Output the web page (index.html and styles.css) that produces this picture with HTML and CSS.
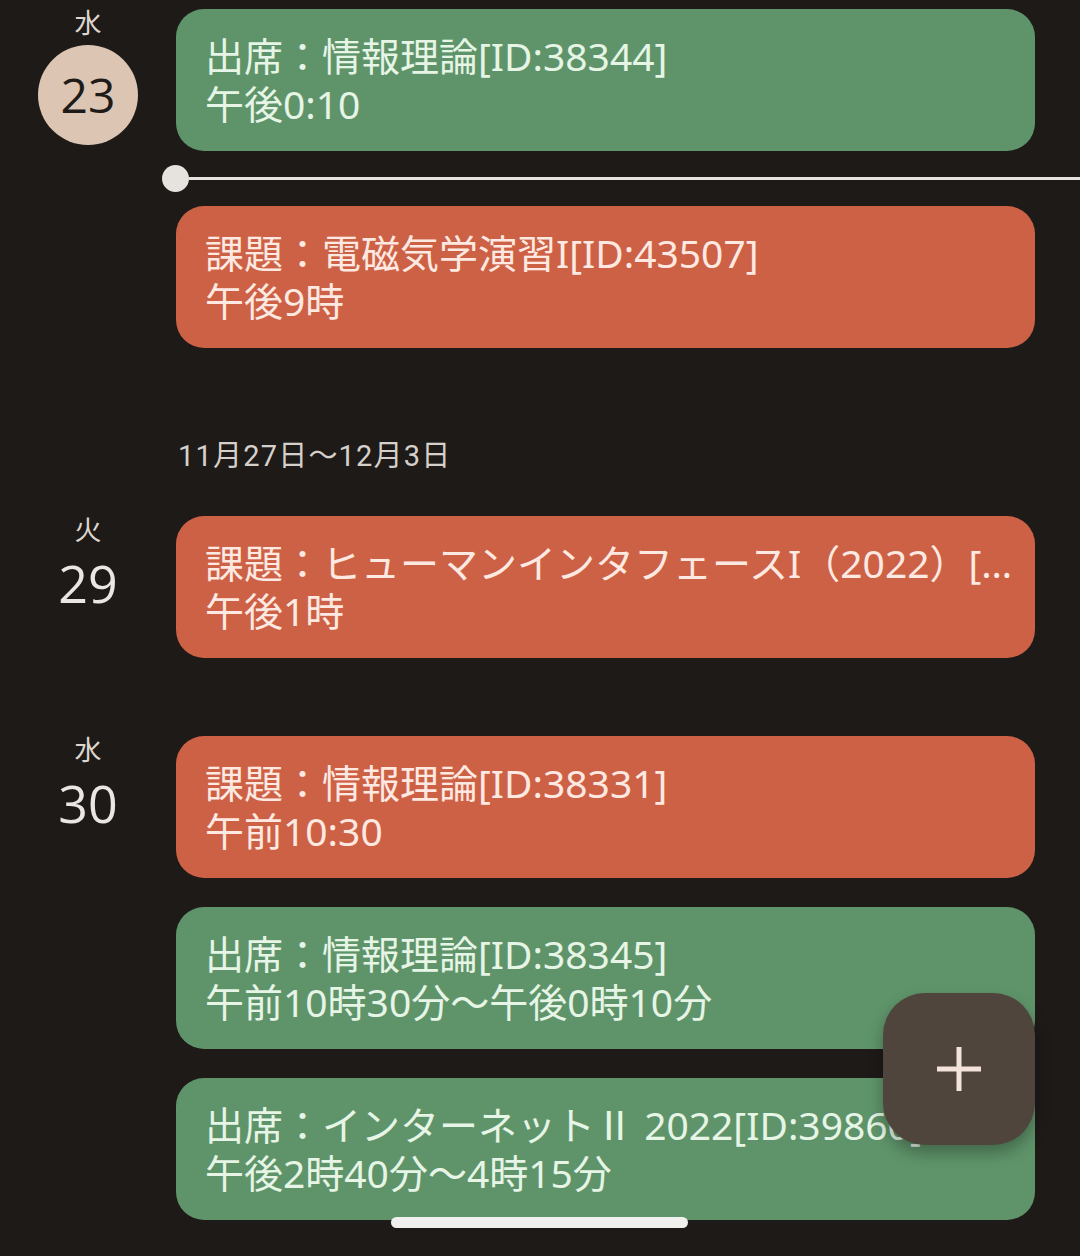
FILE: index.html
```html
<!DOCTYPE html>
<html lang="ja">
<head>
<meta charset="utf-8">
<link rel="stylesheet" href="styles.css">
</head>
<body>
<main class="schedule">
  <section class="day">
    <div class="date">
      <div class="weekday">水</div>
      <div class="num today">23</div>
    </div>
    <div class="events">
      <div class="card green"><div class="title">出席：情報理論[ID:38344]</div><div class="time">午後0:10</div></div>
      <div class="nowline"><span class="dot"></span><span class="rule"></span></div>
      <div class="card orange"><div class="title">課題：電磁気学演習I[ID:43507]</div><div class="time">午後9時</div></div>
    </div>
  </section>

  <div class="week">11月27日〜12月3日</div>

  <section class="day">
    <div class="date">
      <div class="weekday">火</div>
      <div class="num">29</div>
    </div>
    <div class="events">
      <div class="card orange"><div class="title truncate">課題：ヒューマンインタフェースI（2022）[ID:41920]</div><div class="time">午後1時</div></div>
    </div>
  </section>

  <section class="day gap-top">
    <div class="date">
      <div class="weekday">水</div>
      <div class="num">30</div>
    </div>
    <div class="events">
      <div class="card orange"><div class="title">課題：情報理論[ID:38331]</div><div class="time">午前10:30</div></div>
      <div class="card green"><div class="title">出席：情報理論[ID:38345]</div><div class="time">午前10時30分〜午後0時10分</div></div>
      <div class="card green"><div class="title">出席：インターネットⅡ 2022[ID:39860]</div><div class="time">午後2時40分〜4時15分</div></div>
    </div>
  </section>
</main>

<button class="fab" aria-label="追加">
  <svg width="46" height="46" viewBox="0 0 46 46"><path d="M23 1v44M1 23h44" stroke="#f3e3da" stroke-width="5" fill="none"/></svg>
</button>
<div class="home-indicator"></div>
</body>
</html>
```

FILE: styles.css
```css
html, body {
  margin: 0;
  padding: 0;
  background: #1d1a18;
}
body {
  width: 1080px;
  height: 1256px;
  overflow: hidden;
  position: relative;
  font-family: "Noto Sans", "Noto Sans CJK JP", sans-serif;
  color: #e8e2dd;
}
.schedule {
  padding-top: 9px;
}
.day {
  display: grid;
  grid-template-columns: 176px 859px;
}
.day.gap-top {
  margin-top: 78px;
}
.date {
  display: flex;
  flex-direction: column;
  align-items: center;
}
.weekday {
  font-family: "Noto Sans CJK JP", sans-serif;
  font-size: 27px;
  line-height: 26px;
  color: #ddd5ce;
}
.num {
  margin-top: 10px;
  font-size: 52px;
  line-height: 62px;
  color: #ebe6e2;
  font-family: "Open Sans", "Noto Sans", sans-serif;
}
.num.today {
  width: 100px;
  height: 100px;
  border-radius: 50%;
  background: #dcc6b3;
  color: #1e1b19;
  font-size: 48px;
  line-height: 100px;
  text-align: center;
}
.events {
  display: flex;
  flex-direction: column;
  gap: 29px;
}
.card {
  border-radius: 28px;
  padding: 23px 14px 23px 29px;
  font-size: 39px;
  line-height: 48px;
  overflow: hidden;
}
.card .title, .card .time {
  white-space: nowrap;
}
.card .truncate {
  overflow: hidden;
  text-overflow: ellipsis;
}
.green {
  background: #5f946a;
  color: #e6f5e6;
}
.orange {
  background: #cd6146;
  color: #fde9e1;
}
.nowline {
  display: flex;
  align-items: center;
  margin: -15px -45px -15px -14px;
  height: 27px;
}
.dot {
  width: 27px;
  height: 27px;
  border-radius: 50%;
  background: #e6e2de;
  flex: none;
}
.rule {
  flex: 1;
  height: 3px;
  background: #e6e2de;
}
.week {
  margin: 88px 0 40px 178px;
  font-size: 29px;
  line-height: 40px;
  letter-spacing: 1.2px;
  color: #d6d0cb;
  font-family: "Roboto", "Noto Sans CJK JP", sans-serif;
}
.fab {
  position: absolute;
  left: 883px;
  top: 993px;
  width: 152px;
  height: 152px;
  border: none;
  border-radius: 42px;
  background: #4f453d;
  display: flex;
  align-items: center;
  justify-content: center;
  padding: 0;
  box-shadow: 0 8px 16px rgba(0,0,0,0.3);
}
.home-indicator {
  position: absolute;
  left: 391px;
  top: 1217px;
  width: 297px;
  height: 11px;
  border-radius: 6px;
  background: #f0f0ef;
}
```
